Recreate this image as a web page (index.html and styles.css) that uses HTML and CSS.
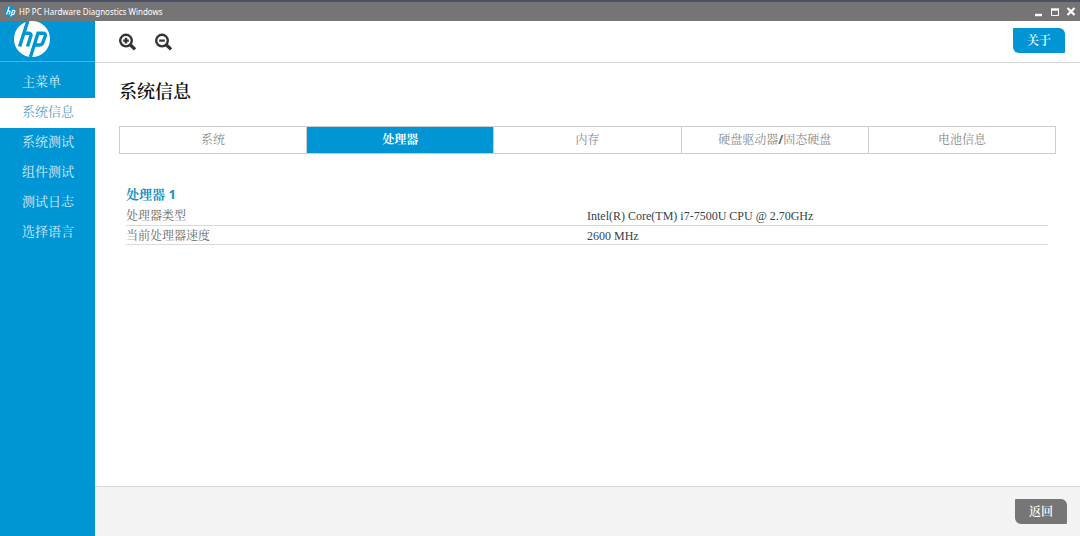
FILE: index.html
```html
<!DOCTYPE html>
<html lang="zh-CN">
<head>
<meta charset="utf-8">
<title>HP PC Hardware Diagnostics Windows</title>
<link rel="stylesheet" href="styles.css">
</head>
<body>
<div class="window">
  <header class="titlebar">
    <svg class="titlebar-logo" viewBox="0 0 36 36" aria-hidden="true">
      <circle cx="18" cy="18" r="18" fill="#0096d6"/>
      <path d="M14 2L5 28M9 16h4q4 0 3 4l-3 8M19 34l6-20h4q4 0 3 4l-2 6q-1 4-5 4h-4" fill="none" stroke="#fff" stroke-width="4"/>
    </svg>
    <span class="titlebar-text">HP PC Hardware Diagnostics Windows</span>
    <div class="window-controls">
      <button class="window-button" aria-label="最小化"><svg viewBox="0 0 10 10"><path d="M1 8h7" stroke="#fff" stroke-width="2.4"/></svg></button>
      <button class="window-button" aria-label="最大化"><svg viewBox="0 0 10 10"><path d="M1.5 2v6.5h7V2" fill="none" stroke="#fff"/><path d="M1 2.5h8" stroke="#fff" stroke-width="2.4"/></svg></button>
      <button class="window-button" aria-label="关闭"><svg viewBox="0 0 10 10"><path d="M1.5 1l7 7M8.5 1l-7 7" stroke="#fff" stroke-width="2.2"/></svg></button>
    </div>
  </header>
  <div class="body">
    <aside class="sidebar">
      <div class="brand">
        <svg class="brand-logo" viewBox="0 0 36 36" role="img" aria-label="HP">
          <circle cx="18" cy="18" r="18" fill="#fff"/>
          <path d="M13.8 0L5.6 25.5M10 12.2h4.2q3.6 0 2.5 3.3l-3.2 10" fill="none" stroke="#0096d6" stroke-width="3.4"/>
          <path d="M16.4 36l7.6-23.8h4.6q3.6 0 2.5 3.3l-2.3 6.2q-.8 2.3-3.4 2.3h-4.4" fill="none" stroke="#0096d6" stroke-width="3.4"/>
        </svg>
      </div>
      <nav class="menu">
        <a class="menu-item" href="#">主菜单</a>
        <a class="menu-item menu-item-active" href="#" aria-current="page">系统信息</a>
        <a class="menu-item" href="#">系统测试</a>
        <a class="menu-item" href="#">组件测试</a>
        <a class="menu-item" href="#">测试日志</a>
        <a class="menu-item" href="#">选择语言</a>
      </nav>
    </aside>
    <div class="main">
      <div class="toolbar">
        <button class="zoom-button" aria-label="放大"><svg viewBox="0 0 18 18"><g fill="none" stroke="#333"><circle cx="7" cy="7.6" r="5.8" stroke-width="2.4"/><path d="M11.5 12l4.6 4.4" stroke-width="3.2"/><path d="M4.2 7.6h5.6M7 4.8v5.6" stroke-width="2.4"/></g></svg></button>
        <button class="zoom-button" aria-label="缩小"><svg viewBox="0 0 18 18"><g fill="none" stroke="#333"><circle cx="7" cy="7.6" r="5.8" stroke-width="2.4"/><path d="M11.5 12l4.6 4.4" stroke-width="3.2"/><path d="M4.2 7.6h5.6" stroke-width="2.2"/></g></svg></button>
        <button class="action action-about">关于</button>
      </div>
      <main class="content">
        <h1 class="page-title">系统信息</h1>
        <div class="tabs" role="tablist">
          <button class="tab" role="tab">系统</button>
          <button class="tab tab-active" role="tab" aria-selected="true">处理器</button>
          <button class="tab" role="tab">内存</button>
          <button class="tab" role="tab">硬盘驱动器<b class="slash">/</b>固态硬盘</button>
          <button class="tab" role="tab">电池信息</button>
        </div>
        <section class="details">
          <h2 class="section-title">处理器 1</h2>
          <table class="info">
            <tr><th scope="row">处理器类型</th><td>Intel(R) Core(TM) i7-7500U CPU @ 2.70GHz</td></tr>
            <tr><th scope="row">当前处理器速度</th><td>2600 MHz</td></tr>
          </table>
        </section>
      </main>
      <footer class="footer">
        <button class="action action-back">返回</button>
      </footer>
    </div>
  </div>
</div>
</body>
</html>
```
FILE: styles.css
```css
* { box-sizing: border-box; }
body {
  margin: 0;
  color: #222;
  background: #fff;
  font-family: "Liberation Serif", "Noto Serif CJK SC", "Noto Sans CJK SC", serif;
  font-size: 12px;
}
button { margin: 0; padding: 0; border: 0; background: none; font: inherit; cursor: pointer; }
svg { display: block; }
.window { display: flex; flex-direction: column; min-height: 100vh; }
.titlebar {
  display: flex;
  align-items: center;
  height: 21px;
  padding: 0 4px 0 5px;
  border-top: 2px solid #4b5063;
  background: #757575;
  color: #fff;
}
.titlebar-logo { width: 11px; height: 11px; margin-right: 3px; }
.titlebar-text { font: 8px/18px "Noto Sans", "Open Sans", sans-serif; }
.window-controls { display: flex; gap: 6px; margin-left: auto; }
.window-button, .window-button svg { width: 10px; height: 10px; }
.body { display: flex; flex: 1; }
.sidebar { flex: none; width: 95px; background: #0096d6; }
.brand { height: 41px; padding-left: 14px; border-bottom: 1px solid #47b1df; }
.brand-logo { width: 36px; height: 36px; }
.menu { padding-top: 6px; }
.menu-item {
  display: block;
  height: 30px;
  padding-left: 22px;
  color: #d5edf8;
  font-size: 13px;
  line-height: 28px;
  text-decoration: none;
}
.menu-item-active { background: #fff; color: #5b9fc9; }
.main { display: flex; flex: 1; flex-direction: column; min-width: 0; }
.toolbar {
  display: flex;
  align-items: center;
  gap: 18px;
  height: 42px;
  padding: 0 15px 0 24px;
  border-bottom: 1px solid #d9d9d9;
}
.zoom-button, .zoom-button svg { width: 18px; height: 18px; }
.action {
  width: 52px;
  height: 25px;
  border-radius: 1px 6px 1px 6px;
  color: #fff;
  font-weight: 600;
  line-height: 24px;
}
.action-about { margin: 0 0 2px auto; background: #0096d6; }
.action-back { background: #767676; }
.content { flex: 1; padding: 15px 24px; }
.page-title { margin: 0; color: #111; font-size: 18px; font-weight: 600; line-height: 28px; }
.tabs { display: flex; margin-top: 20px; border: 1px solid #ccc; }
.tab { flex: 1; height: 26px; color: #888; line-height: 24px; }
.tab + .tab { border-left: 1px solid #ccc; }
.tab-active { background: #0096d6; color: #fff; font-weight: 700; }
.slash { font-family: "Noto Sans", sans-serif; color: #666; }
.details { padding: 31px 8px 0 7px; }
.section-title {
  margin: 0;
  color: #1b8fc6;
  font: 700 13px/18px "Noto Sans", "Noto Serif CJK SC", sans-serif;
}
.info { width: 100%; margin-top: 3px; border-collapse: collapse; table-layout: fixed; }
.info th, .info td {
  height: 19px;
  padding: 2px 0 0;
  border-bottom: 1px solid #d9d9d9;
  line-height: 16px;
  text-align: left;
}
.info th { color: #666; font-weight: 400; }
.info td { color: #34434c; }
.footer {
  display: flex;
  align-items: center;
  justify-content: flex-end;
  height: 50px;
  padding-right: 13px;
  border-top: 1px solid #d9d9d9;
  background: #f3f3f3;
}
```
